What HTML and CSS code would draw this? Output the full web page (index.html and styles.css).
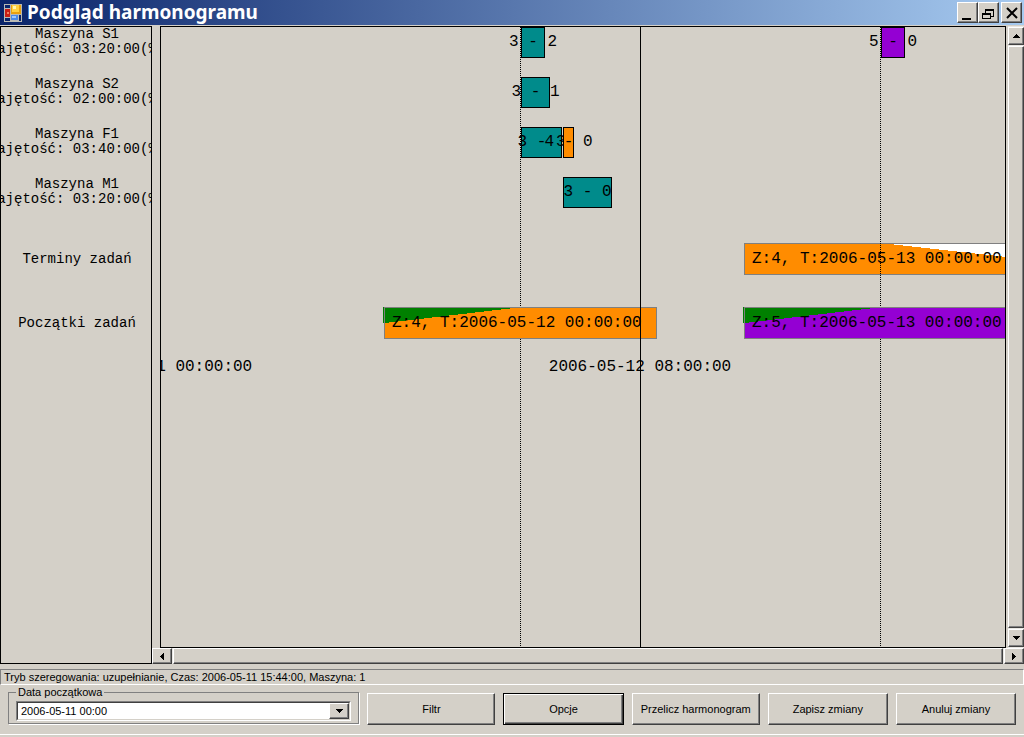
FILE: index.html
```html
<!DOCTYPE html>
<html lang="pl">
<head>
<meta charset="utf-8">
<title>Podgląd harmonogramu</title>
<link rel="stylesheet" href="styles.css">
</head>
<body>
<div class="window">
  <header class="titlebar">
    <svg class="app-icon" width="18" height="18" viewBox="0 0 18 18" shape-rendering="crispEdges" aria-hidden="true">
      <rect width="18" height="18" fill="#b9b9b4"/>
      <rect x="1" y="1" width="5" height="3" fill="#0a246a"/>
      <rect x="1" y="5" width="5" height="8" fill="#c81e14"/>
      <rect x="3" y="8" width="2" height="2" fill="#f08060"/>
      <rect x="1" y="14" width="5" height="3" fill="#0a246a"/>
      <rect x="7" y="1" width="10" height="9" fill="#e8a010"/>
      <rect x="8" y="1" width="7" height="7" fill="#ffd040"/>
      <rect x="9" y="2" width="3" height="3" fill="#fff4b0"/>
      <rect x="7" y="11" width="7" height="5" fill="#4a8ae8"/>
      <rect x="8" y="12" width="4" height="2" fill="#9cc8ff"/>
      <rect x="15" y="11" width="2" height="6" fill="#0a246a"/>
    </svg>
    <h1 class="title">Podgląd harmonogramu</h1>
    <div class="window-buttons">
      <button class="raised" type="button" aria-label="Minimalizuj"><svg width="16" height="16" shape-rendering="crispEdges"><path d="M2 13h9v2H2z"/></svg></button>
      <button class="raised" type="button" aria-label="Przywróć"><svg width="16" height="16" shape-rendering="crispEdges"><path d="M4 4h9v8h-3v-1h2V6H5v2H4zM1 8h9v6H1zM2 10v3h7v-3z" fill-rule="evenodd"/></svg></button>
      <button class="raised close" type="button" aria-label="Zamknij"><svg width="16" height="16"><path d="M3 3l10 10M13 3L3 13" stroke="#000" stroke-width="2"/></svg></button>
    </div>
  </header>

  <main class="workspace">
    <section class="machines">
      <p class="machine">Maszyna S1<br>Zajętość: 03:20:00(%)</p>
      <p class="machine">Maszyna S2<br>Zajętość: 02:00:00(%)</p>
      <p class="machine">Maszyna F1<br>Zajętość: 03:40:00(%)</p>
      <p class="machine">Maszyna M1<br>Zajętość: 03:20:00(%)</p>
      <p class="task-row">Terminy zadań</p>
      <p class="task-row">Początki zadań</p>
    </section>

    <section class="chart">
      <div class="bar s1 teal">3 - 2</div>
      <div class="bar s2 teal">3 - 1</div>
      <div class="bar f1a teal">3 - 3</div>
      <div class="bar f1b orange">4 - 0</div>
      <div class="bar m1 teal">3 - 0</div>
      <div class="bar s1b violet">5 - 0</div>
      <div class="task due orange">
        <svg class="wedge" width="271" height="30" shape-rendering="crispEdges"><path d="M144 0h127v14z" fill="#fff"/></svg>
        <span class="task-text">Z:4, T:2006-05-13 00:00:00</span>
      </div>
      <div class="line dotted first"></div>
      <div class="line dotted second"></div>
      <div class="task start-a orange">
        <svg class="wedge" width="271" height="30" shape-rendering="crispEdges"><path d="M0 0h129L0 15zM-2-1h1v16h-1z" fill="#008000"/></svg>
        <span class="task-text">Z:4, T:2006-05-12 00:00:00</span>
      </div>
      <div class="task start-b violet">
        <svg class="wedge" width="271" height="30" shape-rendering="crispEdges"><path d="M0 0h129L0 15zM-2-1h1v16h-1z" fill="#008000"/></svg>
        <span class="task-text">Z:5, T:2006-05-13 00:00:00</span>
      </div>
      <div class="line solid"></div>
      <div class="time t0">2006-05-11 00:00:00</div>
      <div class="time t1">2006-05-12 08:00:00</div>
    </section>

    <div class="scroll vertical">
      <button class="raised" type="button" aria-label="W górę"><svg width="7" height="4" shape-rendering="crispEdges"><path d="M3 0h1v1h1v1h1v1h1v1H0V3h1V2h1V1h1z"/></svg></button>
      <div class="raised thumb"></div>
      <button class="raised" type="button" aria-label="W dół"><svg width="7" height="4" shape-rendering="crispEdges"><path d="M0 0h7v1H6v1H5v1H4v1H3V3H2V2H1V1H0z"/></svg></button>
    </div>
    <div class="scroll horizontal">
      <button class="raised" type="button" aria-label="W lewo"><svg width="4" height="7" shape-rendering="crispEdges"><path d="M4 0v7H3V6H2V5H1V4H0V3h1V2h1V1h1V0z"/></svg></button>
      <div class="raised thumb"></div>
      <button class="raised" type="button" aria-label="W prawo"><svg width="4" height="7" shape-rendering="crispEdges"><path d="M0 0v7h1V6h1V5h1V4h1V3H3V2H2V1H1V0z"/></svg></button>
    </div>
  </main>

  <div class="status">Tryb szeregowania: uzupełnianie, Czas: 2006-05-11 15:44:00, Maszyna: 1</div>

  <footer class="actions">
    <fieldset class="group">
      <legend><label for="start">Data początkowa</label></legend>
      <div class="combo">
        <select id="start"><option>2006-05-11 00:00</option></select>
        <span class="raised arrow" aria-hidden="true"><svg width="7" height="4" shape-rendering="crispEdges"><path d="M0 0h7v1H6v1H5v1H4v1H3V3H2V2H1V1H0z"/></svg></span>
      </div>
    </fieldset>
    <button class="raised action" type="button">Filtr</button>
    <button class="raised action default" type="button">Opcje</button>
    <button class="raised action" type="button">Przelicz harmonogram</button>
    <button class="raised action" type="button">Zapisz zmiany</button>
    <button class="raised action" type="button">Anuluj zmiany</button>
  </footer>
</div>
</body>
</html>
```
FILE: styles.css
```css
* { box-sizing: border-box; }

body {
  margin: 0;
  background: #d4d0c8;
  color: #000;
  font: 11px/14px "Liberation Sans", Arial, sans-serif;
}

.window {
  display: flex;
  flex-direction: column;
  height: 100vh;
  padding-bottom: 2px;
}

button {
  display: flex;
  align-items: center;
  justify-content: center;
  padding: 0;
  color: #000;
  font: inherit;
}

.raised {
  background: #d4d0c8;
  border: 1px solid;
  border-color: #fff #404040 #404040 #fff;
  box-shadow: inset -1px -1px #808080;
}

/* Title bar */
.titlebar {
  display: flex;
  align-items: center;
  gap: 5px;
  height: 26px;
  padding: 0 2px 0 4px;
  background: linear-gradient(90deg, #0a246a, #a6caf0);
  border-bottom: 1px solid #d4d0c8;
}

.title {
  flex: 1;
  margin: 0;
  color: #fff;
  font: bold 19px/25px "Noto Sans", sans-serif;
}

.window-buttons { display: flex; }
.window-buttons button { width: 21px; height: 21px; }
.window-buttons .close { margin-left: 2px; }

/* Workspace */
.workspace {
  flex: 1;
  display: grid;
  grid-template-columns: 152px 8px 1fr 2px 16px;
  grid-template-rows: 1fr 16px;
  min-height: 0;
}

.machines {
  grid-area: 1 / 1 / 3 / 2;
  display: flex;
  flex-direction: column;
  align-items: center;
  overflow: hidden;
  padding-left: 2px;
  border: 1px solid #000;
  font: 14px/15px "Liberation Mono", "Courier New", monospace;
  text-align: center;
  white-space: nowrap;
}

.machine { height: 50px; margin: 0; }
.task-row { height: 64px; margin: 0; padding-top: 25px; }

.chart {
  grid-area: 1 / 3;
  position: relative;
  overflow: hidden;
  border: 1px solid #000;
  font: 16px/30px "Liberation Mono", "Courier New", monospace;
  white-space: nowrap;
}

.bar {
  position: absolute;
  display: flex;
  justify-content: center;
  height: 31px;
  border: 1px solid #000;
  line-height: 28px;
  white-space: pre;
}

.teal { background: #008b8b; }
.orange { background: #ff8c00; }
.violet { background: #9400d3; }

.s1 { left: 360px; top: 0; width: 24px; }
.s2 { left: 360px; top: 50px; width: 29px; }
.f1a { left: 360px; top: 100px; width: 41px; }
.f1b { left: 402px; top: 100px; width: 11px; }
.m1 { left: 402px; top: 150px; width: 49px; }
.s1b { left: 720px; top: 0; width: 24px; }

.task {
  position: absolute;
  width: 273px;
  height: 32px;
  border: 1px solid #808080;
}

.due { left: 583px; top: 216px; }
.start-a { left: 223px; top: 280px; }
.start-b { left: 583px; top: 280px; }

.wedge { position: absolute; left: 0; top: 0; overflow: visible; }
.task-text { position: relative; padding-left: 7px; }

.line { position: absolute; top: 0; bottom: 0; width: 1px; }
.dotted { background: repeating-linear-gradient(#000 0 1px, transparent 1px 2px); }
.solid { left: 479px; background: #000; }
.first { left: 359px; }
.second { left: 719px; }

.time { position: absolute; top: 325px; transform: translateX(-50%); }
.t0 { left: 0; }
.t1 { left: 479px; }

/* Scroll bars */
.scroll { display: flex; gap: 1px; background: #e9e7e3; }
.thumb { flex: 1; }
.vertical { grid-area: 1 / 5; flex-direction: column; padding: 1px 0; }
.vertical button { height: 18px; }
.horizontal { grid-area: 2 / 2 / 3 / 6; }
.horizontal button { width: 20px; }

/* Status line */
.status {
  height: 16px;
  margin-top: 5px;
  padding-left: 3px;
  border: 1px solid;
  border-color: #808080 #fff #fff #808080;
  white-space: nowrap;
}

/* Bottom bar */
.actions {
  display: grid;
  grid-template-columns: 351fr 128fr 120fr 128fr 120fr 120fr;
  gap: 8px;
  height: 50px;
  padding: 0 8px;
  border-bottom: 1px solid #fff;
}

.action { height: 32px; margin-top: 8px; }

.default {
  border-color: #000;
  box-shadow: inset 1px 1px #fff, inset -1px -1px #404040, inset -2px -2px #808080;
}

.group {
  min-width: 0;
  height: 39px;
  margin: 0;
  padding: 2px 7px 0;
  border: 1px solid #808080;
  box-shadow: 1px 1px #fff;
}

.group legend { padding: 0 2px; background: #d4d0c8; }

.combo {
  position: relative;
  height: 20px;
  border: 1px solid;
  border-color: #808080 #fff #fff #808080;
}

.combo select {
  appearance: none;
  width: 100%;
  height: 18px;
  padding: 0 20px 0 3px;
  border: 1px solid;
  border-color: #404040 #d4d0c8 #d4d0c8 #404040;
  border-radius: 0;
  background: #fff;
  color: #000;
  font: inherit;
}

.arrow {
  position: absolute;
  top: 1px;
  right: 1px;
  bottom: 1px;
  display: flex;
  align-items: center;
  justify-content: center;
  width: 20px;
  pointer-events: none;
}
```
